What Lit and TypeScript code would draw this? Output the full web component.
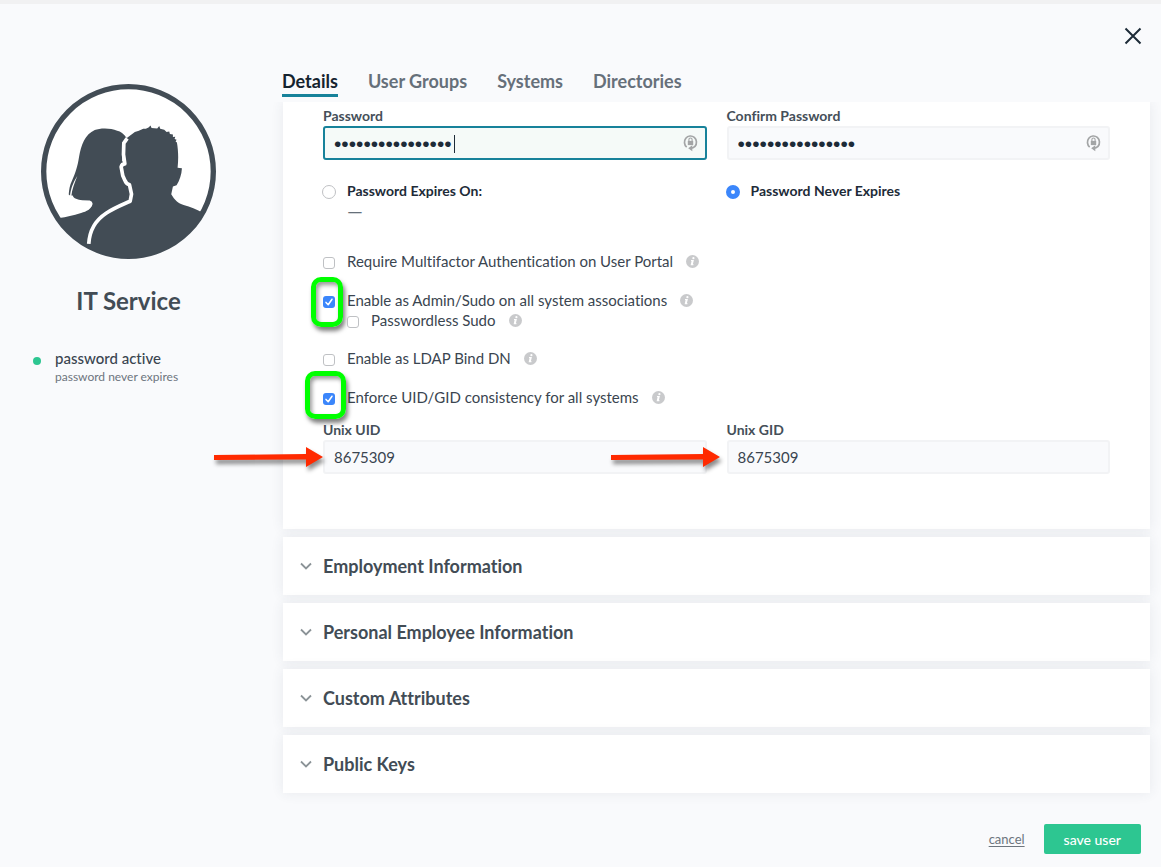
import { LitElement, html, css, nothing } from "lit";
import { customElement, property, state } from "lit/decorators.js";
import { classMap } from "lit/directives/class-map.js";

const base = css`
  * { box-sizing: border-box; }
  button, input { font: inherit; color: inherit; margin: 0; }
`;

@customElement("user-avatar")
class UserAvatar extends LitElement {
  static styles = css`
    :host { display: block; width: 175px; }
    .art { display: block; width: 100%; }
  `;
  render() {
    return html`<svg class="art" viewBox="64 42 524 524" role="img" aria-label="User avatar">
      <defs><clipPath id="disc"><circle cx="326" cy="304" r="258" /></clipPath></defs>
      <circle cx="326" cy="304" r="254" fill="#fff" stroke="#424c55" stroke-width="16" />
      <g clip-path="url(#disc)" fill="#424c55">
        <path d="M320 203C311 190 303 184 292 182C272 173 240 174 225 180C196 193 184 225 178 260C173 291 168 306 157 331C150 346 148 358 147 373L151 376C153 358 158 341 173 317C164 340 157 358 155 376L159 376C161 385 174 389 188 390L210 391Q220 394 218 403C214 417 201 424 184 428C160 435 140 440 119 443L64 480L110 600L420 600L420 300L318 286L307 272L308 218Z" />
        <path d="M206 522C208 480 222 449 258 427C284 411 306 402 327 393L334 373L326 343C318 340 316 337 314 330L309 317L306 287Q308 281 313 281L318 277L311 254L312 218L322 203L345 186L357 182L370 176L378 176L386 172L392 166L395 174L412 175L418 168L421 176L433 179L440 186L448 184L450 192L459 193L459 201L466 200L464 207L470 209L467 214L471 217C475 240 476 265 473 293L486 294C485 313 479 330 470 345L459 349L454 372C464 390 475 399 491 404C512 410 529 417 547 427L600 460L520 610L206 610Z" />
      </g>
      <path d="M207 521C209 483 224 452 259 429C285 412 309 403 331 393L335 372L329 344C320 341 317 336 315 330L309 317L304 290Q306 281 315 281L311 253L312 219L322 205" fill="none" stroke="#fff" stroke-width="11" stroke-linejoin="round" />
    </svg>`;
  }
}

@customElement("note-arrow")
class NoteArrow extends LitElement {
  static styles = css`
    :host { display: block; width: 120px; height: 32px; pointer-events: none; }
    .art { display: block; overflow: visible; filter: drop-shadow(2px 4px 2px rgba(0, 0, 0, 0.45)); }
  `;
  render() {
    return html`<svg class="art" width="120" height="32" viewBox="0 0 120 32" aria-hidden="true">
      <path d="M4 13 96 12V5L113 15L96 25V17.500L4 18Z" fill="#ff2a00" />
    </svg>`;
  }
}

@customElement("check-row")
class CheckRow extends LitElement {
  @property() label = "";
  @property({ type: Boolean }) checked = false;
  @property() mark = "";
  static styles = [base, css`
    :host { display: flex; align-items: flex-start; height: 20px; line-height: 18px; }
    .holder { position: relative; display: flex; margin: 5px 12px 0 0; }
    .box {
      appearance: none; width: 12px; height: 12px;
      border: 1px solid #bfc1c4; border-radius: 3px; background: #fff;
    }
    .box:checked { border: 0; background: #3b86fb; }
    .tick { position: absolute; left: 0; top: 0; pointer-events: none; }
    .text { color: #3a4550; }
    .mark {
      position: absolute; pointer-events: none; border: 5px solid #00ff00; border-radius: 10px;
      box-shadow: 2px 4px 4px rgba(0, 0, 0, 0.5), inset 2px 3px 4px rgba(0, 0, 0, 0.4);
    }
    .tall { left: -12px; top: -19px; width: 32px; height: 50px; }
    .wide { left: -18px; top: -22px; width: 41px; height: 48px; }
    .info {
      display: grid; width: 13px; height: 13px; margin: 3px 0 0 13px; padding: 0;
      border: 0; background: none;
    }
  `];
  render() {
    return html`
      <span class="holder">
        <input id="box" class="box" type="checkbox" .checked=${this.checked}
          @change=${(e: Event) => (this.checked = (e.target as HTMLInputElement).checked)} />
        ${this.checked ? html`<svg class="tick" width="12" height="12" viewBox="0 0 12 12" aria-hidden="true">
          <path d="M3 6.400 5.200 8.700 9 3.200" fill="none" stroke="#fff" stroke-width="1.500" stroke-linecap="round" stroke-linejoin="round" /></svg>` : nothing}
        ${this.mark ? html`<span class=${classMap({ mark: true, [this.mark]: true })}></span>` : nothing}
      </span>
      <label class="text" for="box">${this.label}</label>
      <button class="info" type="button" aria-label="More about: ${this.label}">
        <svg width="13" height="13" viewBox="0 0 13 13" aria-hidden="true">
          <circle cx="6.500" cy="6.500" r="6.500" fill="#c9cacc" />
          <circle cx="7.400" cy="3.200" r="1.100" fill="#fff" />
          <path d="M5 5.500H7.200L6.200 9.600H7.400M6.200 5.500 5.300 9.800H6.400" fill="none" stroke="#fff" stroke-width="1.100" />
        </svg>
      </button>`;
  }
}

@customElement("form-field")
class FormField extends LitElement {
  @property() label = "";
  @property() value = "";
  @property() type = "text";
  @property({ type: Boolean }) active = false;
  @property() arrow = "";
  static styles = [base, css`
    :host { display: block; }
    .label { display: block; font-size: 14px; font-weight: 700; line-height: 16px; margin-bottom: 2px; color: #454f59; }
    .wrap { position: relative; }
    .input {
      display: block; width: 100%; height: 34px; padding: 0 36px 0 9px;
      border: 2px solid #f2f3f5; border-radius: 3px; background: #f9fafc;
      color: #3a4550; outline: none; font-size: 15px;
    }
    .secret { padding-top: 2px; color: #1d2b38; font-family: "Liberation Sans", Arial, sans-serif; font-size: 21px; }
    .active { border-color: #17829a; background: #f5faf8; caret-color: transparent; }
    .caret { position: absolute; left: 131px; top: 9px; width: 1px; height: 18px; background: #1d2b38; }
    .key { position: absolute; right: 9px; top: 8px; }
    .arrow { position: absolute; right: 100%; top: 2px; }
    .touching { margin-right: -7px; }
  `];
  render() {
    const secret = this.type === "password";
    return html`
      <label class="label" for="input">${this.label}</label>
      <div class="wrap">
        <input id="input" class=${classMap({ input: true, secret, active: this.active })}
          type=${this.type} .value=${this.value} autocomplete="off" />
        ${this.active ? html`<span class="caret"></span>` : nothing}
        ${secret ? html`<svg class="key" width="15" height="18" viewBox="0 0 15 18" aria-hidden="true">
          <path d="M3.700 13.200A6 6.300 0 1 1 12 12.400Q10.500 14.200 7 14.300" fill="none" stroke="#a3a5a6" stroke-width="1.700" />
          <path d="M9.300 11.300 5.200 14.200 9.300 17.300Z" fill="#a3a5a6" />
          <rect x="4.800" y="6.900" width="5.400" height="4.200" fill="#a3a5a6" />
          <path d="M5.900 7V5.600A1.600 1.600 0 0 1 9.100 5.600V7" fill="none" stroke="#a3a5a6" stroke-width="1.100" />
        </svg>` : nothing}
        ${this.arrow ? html`<note-arrow class=${classMap({ arrow: true, touching: this.arrow === "touching" })}></note-arrow>` : nothing}
      </div>`;
  }
}

@customElement("app-root")
class AppRoot extends LitElement {
  @state() private tab = "Details";
  private tabs = ["Details", "User Groups", "Systems", "Directories"];
  private sections = ["Employment Information", "Personal Employee Information", "Custom Attributes", "Public Keys"];

  static styles = [base, css`
    :host {
      display: flex; flex-direction: column; min-height: 100vh; background: #f9fafc;
      border-top: 4px solid #f1f1f2; box-sizing: border-box;
      font-family: Lato, "Open Sans", sans-serif; font-size: 15px; color: #3a4550;
      font-variant-ligatures: none;
    }
    .top { display: flex; justify-content: flex-end; padding: 20px 16px 0; height: 67px; }
    .close { display: grid; place-items: center; width: 24px; height: 24px; padding: 0; border: 0; background: none; }
    .body { display: grid; grid-template-columns: 257px minmax(0, 1fr); column-gap: 14px; }
    .side { display: flex; flex-direction: column; align-items: center; padding-top: 13px; }
    .name { margin: 28px 0 0; font-size: 24px; line-height: 28px; font-weight: 700; color: #424c55; }
    .status { align-self: stretch; display: grid; grid-template-columns: 8px 1fr; column-gap: 14px; padding: 33px 0 0 33px; }
    .dot { width: 8px; height: 8px; margin-top: 9px; border-radius: 50%; background: #2dc691; }
    .state { margin: 0; line-height: 20px; font-weight: 500; }
    .detail { margin: 0; font-size: 12px; line-height: 18px; color: #6d757e; }
    .tabs { display: flex; gap: 30px; padding-left: 11px; margin-bottom: 5px; }
    .tab {
      padding: 0 0 3px; border: 0; border-bottom: 3px solid transparent; background: none;
      font-size: 18px; line-height: 20px; font-weight: 700; color: #66707a;
    }
    .on { color: #15232f; border-color: #17829a; }
    .scroll { display: grid; gap: 8px; padding: 0 11px 15px 12px; clip-path: inset(0 0 0 -80px); }
    .card { background: #fff; box-shadow: 0 0 12px rgba(60, 70, 90, 0.09); }
    .form { padding: 6px 40px 55px; }
    .pair { display: grid; grid-template-columns: 1fr 1fr; column-gap: 20px; }
    .expiry { margin: 22px 0 32px; }
    .choice { display: grid; grid-template-columns: 12px 1fr; column-gap: 12px; align-items: center; align-content: start; }
    .radio { appearance: none; width: 14px; height: 14px; border: 1px solid #bfc1c4; border-radius: 50%; background: #fff; margin: 2px 0 0 -1px; }
    .radio:checked { border: 5px solid #3b86fb; }
    .choicetext { font-size: 14px; line-height: 18px; font-weight: 700; color: #1d2b38; }
    .never { grid-column: 2; font-size: 20px; line-height: 20px; color: #66707a; }
    .checks { display: grid; gap: 19px; margin-bottom: 14px; }
    .nested { padding-left: 24px; height: 19px; }
    .fold {
      display: grid; grid-template-columns: 11px 1fr; column-gap: 12px; align-items: center;
      width: 100%; height: 58px; padding: 0 17px; border: 0; background: none; text-align: left;
      font-size: 18px; font-weight: 700; color: #424c55;
    }
    .foldtitle { margin: 0; }
    .foot { display: flex; justify-content: flex-end; align-items: center; gap: 19px; padding: 16px 20px 13px; }
    .cancel { font-size: 13px; color: #6d757e; text-decoration: underline; text-underline-offset: 2px; }
    .save { height: 30px; padding: 0 20px; border: 0; border-radius: 2px; background: #2dc691; color: #fff; font-size: 14px; font-weight: 500; }
  `];

  render() {
    return html`
      <header class="top">
        <button class="close" type="button" aria-label="Close">
          <svg width="18" height="18" viewBox="0 0 18 18" aria-hidden="true"><path d="M1.500 1.500 16.500 16.500M16.500 1.500 1.500 16.500" stroke="#1d2b38" stroke-width="2" /></svg>
        </button>
      </header>
      <div class="body">
        <aside class="side">
          <user-avatar></user-avatar>
          <h1 class="name">IT Service</h1>
          <div class="status">
            <span class="dot"></span>
            <div>
              <p class="state">password active</p>
              <p class="detail">password never expires</p>
            </div>
          </div>
        </aside>
        <main>
          <nav class="tabs">
            ${this.tabs.map((t) => html`<button type="button" class=${classMap({ tab: true, on: t === this.tab })}
              @click=${() => (this.tab = t)}>${t}</button>`)}
          </nav>
          <div class="scroll">
            <section class="card form">
              <div class="pair">
                <form-field label="Password" type="password" value="correcthorsebatt" active></form-field>
                <form-field label="Confirm Password" type="password" value="correcthorsebatt"></form-field>
              </div>
              <div class="pair expiry">
                <div class="choice">
                  <input class="radio" type="radio" name="expiry" id="on" />
                  <label class="choicetext" for="on">Password Expires On:</label>
                  <span class="never">—</span>
                </div>
                <div class="choice">
                  <input class="radio" type="radio" name="expiry" id="never" checked />
                  <label class="choicetext" for="never">Password Never Expires</label>
                </div>
              </div>
              <div class="checks">
                <check-row label="Require Multifactor Authentication on User Portal"></check-row>
                <div>
                  <check-row label="Enable as Admin/Sudo on all system associations" checked mark="tall"></check-row>
                  <check-row class="nested" label="Passwordless Sudo"></check-row>
                </div>
                <check-row label="Enable as LDAP Bind DN"></check-row>
                <check-row label="Enforce UID/GID consistency for all systems" checked mark="wide"></check-row>
              </div>
              <div class="pair">
                <form-field label="Unix UID" value="8675309" arrow="touching"></form-field>
                <form-field label="Unix GID" value="8675309" arrow="apart"></form-field>
              </div>
            </section>
            ${this.sections.map((s) => html`<section class="card">
              <h2 class="foldtitle"><button class="fold" type="button">
                <svg width="12" height="8" viewBox="0 0 12 8" aria-hidden="true"><path d="M1 1.500 6 6.500 11 1.500" fill="none" stroke="#8b9397" stroke-width="1.800" /></svg>
                <span>${s}</span>
              </button></h2>
            </section>`)}
          </div>
        </main>
      </div>
      <footer class="foot">
        <a class="cancel" href="#">cancel</a>
        <button class="save" type="button">save user</button>
      </footer>`;
  }
}
